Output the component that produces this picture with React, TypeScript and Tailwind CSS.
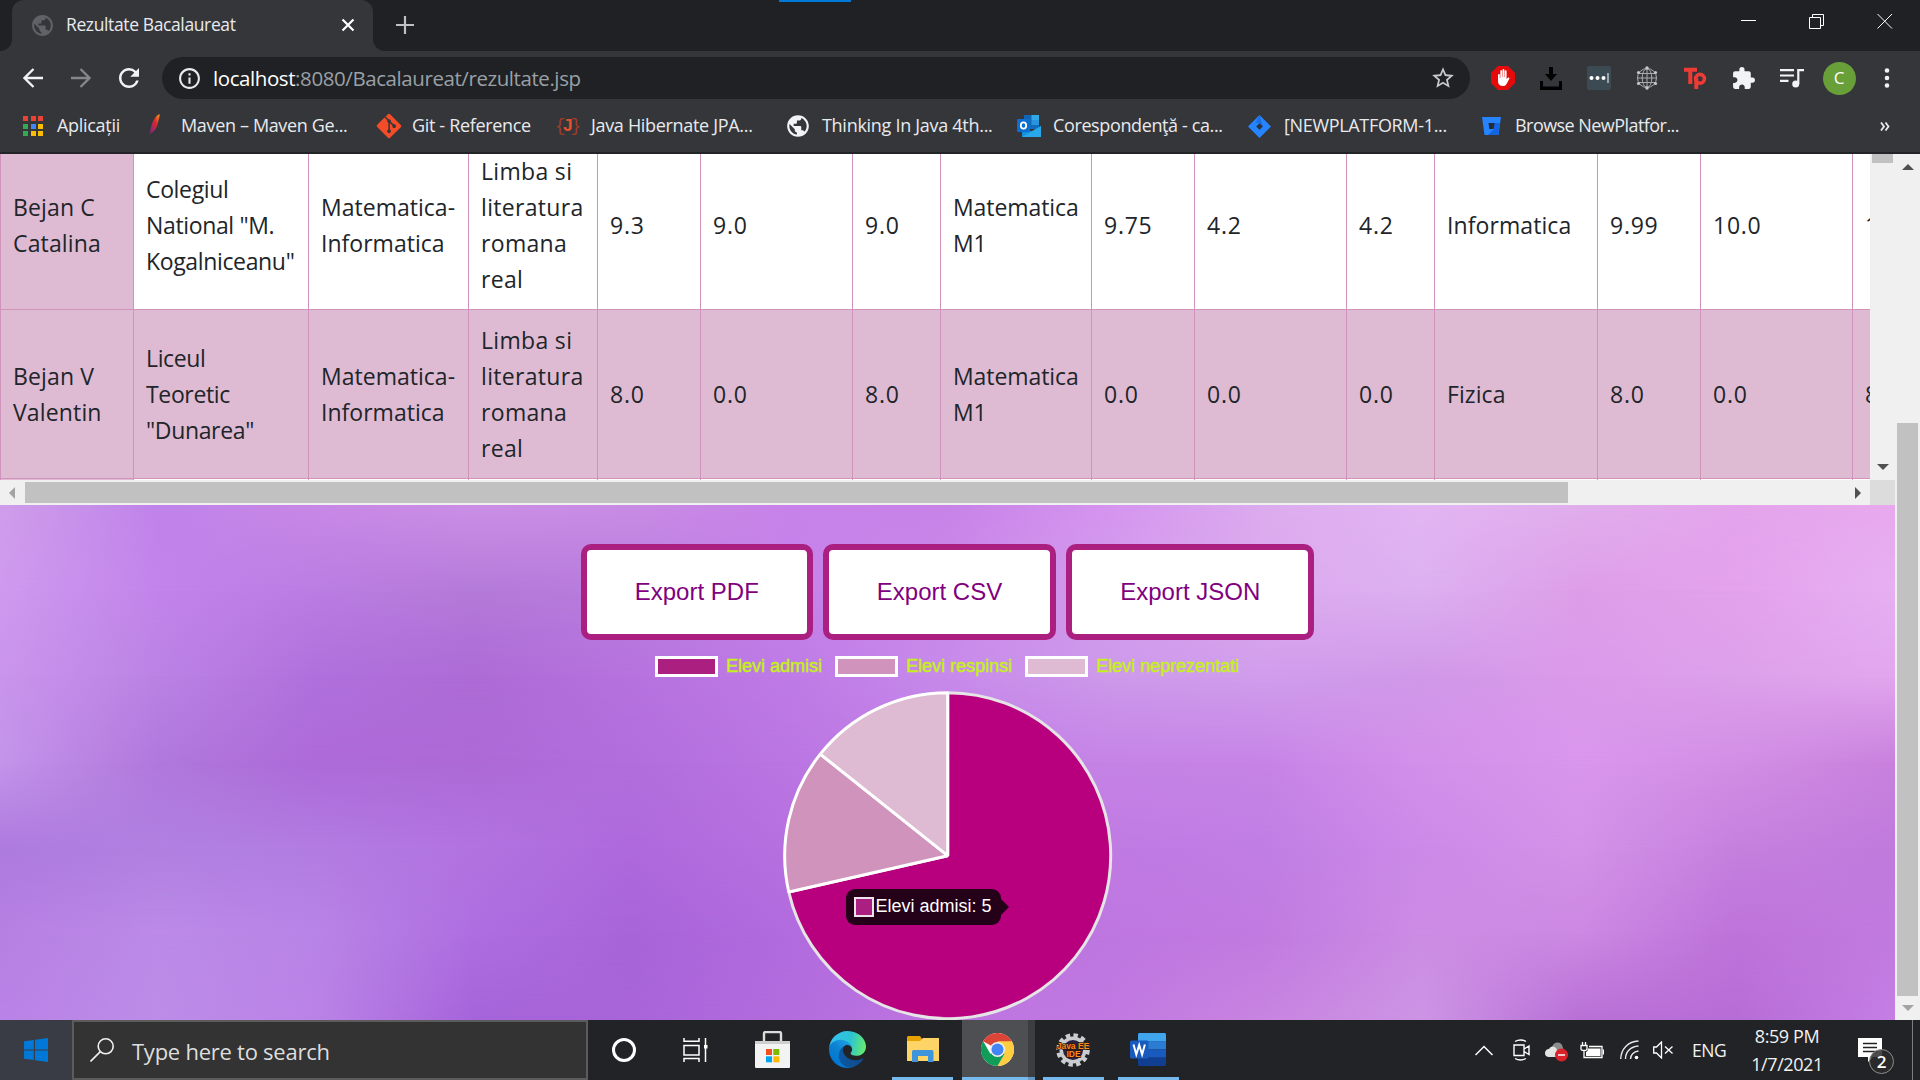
import React from "react";
import { FaGitAlt } from "react-icons/fa";
import { MdPublic, MdOutlineInfo, MdStarOutline, MdExtension, MdRefresh } from "react-icons/md";

/* ---------- browser frame ---------- */

function TabStrip() {
  return (
    <div className="relative flex h-[51px] shrink-0 bg-[#202124]">
      <div className="absolute left-[779px] top-0 h-[2px] w-[72px] bg-[#0078d7]" />
      <div className="flex w-[12px] items-end bg-[#35363a]">
        <div className="h-full w-full rounded-br-[12px] bg-[#202124]" />
      </div>
      <div className="flex w-[361px] items-center rounded-t-[12px] bg-[#35363a] pl-[18px]">
        <MdPublic className="mt-[-1px] size-[25px] text-[#5f6368]" />
        <span className="ml-[11px] mt-[-3px] w-[263px] whitespace-nowrap text-[17.5px] tracking-[-0.38px] text-[#e8eaed]">
          Rezultate Bacalaureat
        </span>
        <svg className="ml-[12px] mt-[-1px] size-[14px]" viewBox="0 0 14 14" stroke="#fff" strokeWidth="2.2">
          <path d="M1.5 1.5 12.5 12.5M12.5 1.5 1.5 12.5" />
        </svg>
      </div>
      <div className="flex w-[12px] bg-[#35363a]">
        <div className="h-full w-full rounded-bl-[12px] bg-[#202124]" />
      </div>
      <svg className="ml-[11px] mt-[16px] size-[18px]" viewBox="0 0 18 18" stroke="#bdc1c6" strokeWidth="2.2">
        <path d="M9 0V18M0 9H18" />
      </svg>
      <div className="ml-auto flex gap-[52px] pr-[27px] pt-[14px]">
        <svg className="size-[16px]" viewBox="0 0 16 16" stroke="#fff">
          <path d="M0 6.5H15" />
        </svg>
        <svg className="size-[16px]" viewBox="0 0 16 16" stroke="#fff" fill="none">
          <path d="M.5 3.5H11.5V14.5H.5ZM3.5 3.5V.5H14.5V11.5H11.5" />
        </svg>
        <svg className="size-[16px]" viewBox="0 0 16 16" stroke="#fff">
          <path d="M.5 0 15 14.5M15 0 .5 14.5" />
        </svg>
      </div>
    </div>
  );
}

function Slot({ children }: { children: React.ReactNode }) {
  return <div className="flex w-[48px] shrink-0 items-center justify-center">{children}</div>;
}

function Toolbar() {
  return (
    <div className="flex h-[54px] shrink-0 items-center bg-[#35363a] pl-[9px]">
      <Slot>
        <svg className="size-[20px]" viewBox="0 0 20 20" fill="none" stroke="#f1f3f4" strokeWidth="2.3">
          <path d="M20 10H2M10.5 1 1.5 10 10.5 19" />
        </svg>
      </Slot>
      <Slot>
        <svg className="size-[20px]" viewBox="0 0 20 20" fill="none" stroke="#85878b" strokeWidth="2.3">
          <path d="M0 10H18M9.5 1 18.5 10 9.5 19" />
        </svg>
      </Slot>
      <Slot>
        <MdRefresh className="size-[30px] text-[#f1f3f4]" />
      </Slot>
      <div className="ml-[9px] flex h-[42px] w-[1308px] shrink-0 items-center rounded-full bg-[#202124] pl-[15px] pr-[14px]">
        <MdOutlineInfo className="size-[25px] text-[#e8eaed]" />
        <span className="ml-[11px] whitespace-nowrap text-[20.5px] tracking-[-0.42px] text-[#9aa0a6]">
          <span className="text-white">localhost</span>:8080/Bacalaureat/rezultate.jsp
        </span>
        <MdStarOutline className="ml-auto size-[26px] text-[#c8cacd]" />
      </div>
      <div className="ml-[9px] flex">
        <Slot>
          <svg className="size-[24px]" viewBox="0 0 24 24">
            <path d="M7 0H17L24 7V17L17 24H7L0 17V7Z" fill="#e60b0b" />
            <path
              d="M7 9c0-1.400 1.800-1.400 1.800 0V12h.5V5.400c0-1.400 1.800-1.400 1.800 0V11h.4V4.200c0-1.500 1.900-1.500 1.900 0V11h.4V5.400c0-1.400 1.800-1.400 1.800 0V13.200l1.200-1.400c.9-1 2 0 1.500 1l-2.600 5c-.8 1.600-2 2.300-3.900 2.300-3 0-4.800-1.800-4.800-5Z"
              fill="#fff"
            />
          </svg>
        </Slot>
        <Slot>
          <svg className="size-[24px]" viewBox="0 0 24 24" fill="#000">
            <path d="M10 1H14V8H18L12 15 6 8H10ZM1 15H4V20.5H20V15H23V24H1Z" />
          </svg>
        </Slot>
        <Slot>
          <svg className="size-[24px]" viewBox="0 0 24 24">
            <rect width="24" height="24" rx="2" fill="#3c4a54" />
            <circle cx="4.5" cy="12" r="2" fill="#fff" />
            <circle cx="10.5" cy="12" r="2" fill="#fff" />
            <circle cx="16.5" cy="12" r="2" fill="#fff" />
            <path d="M21 7V17" stroke="#cfd3d6" strokeWidth="1.3" />
          </svg>
        </Slot>
        <Slot>
          <svg className="size-[24px]" viewBox="0 0 24 24" fill="none" stroke="#a9abae" strokeWidth="1">
            <circle cx="12" cy="12" r="9.5" />
            <ellipse cx="12" cy="12" rx="4.8" ry="9.5" />
            <path d="M12 2V22M2 12H22M4 7.5H20M4 16.5H20" />
            <g fill="#c5c7ca" stroke="none">
              <circle cx="12" cy="2" r="1.7" />
              <circle cx="12" cy="22" r="1.7" />
              <circle cx="3.5" cy="6.5" r="1.6" />
              <circle cx="20.5" cy="6.5" r="1.6" />
              <circle cx="3.5" cy="17.5" r="1.6" />
              <circle cx="20.5" cy="17.5" r="1.6" />
            </g>
          </svg>
        </Slot>
        <Slot>
          <svg className="size-[24px]" viewBox="0 0 24 24" fill="none" stroke="#ee3b36">
            <path d="M1 3.8H14M7.3 3V18" strokeWidth="4" />
            <path d="M13.3 23V12" strokeWidth="4" />
            <circle cx="17" cy="12.8" r="4.4" strokeWidth="3.6" />
          </svg>
        </Slot>
        <Slot>
          <MdExtension className="size-[25px] text-[#f1f3f4]" />
        </Slot>
        <Slot>
          <svg className="h-[20px] w-[25px]" viewBox="0 0 25 20" fill="none" stroke="#f1f3f4" strokeWidth="2.2">
            <path d="M1 2.200H15M1 7.500H15M1 12.800H9.500M19.300 16V2.200H25" />
            <circle cx="16.700" cy="16" r="3.500" fill="#f1f3f4" stroke="none" />
          </svg>
        </Slot>
        <Slot>
          <div className="flex size-[33px] items-center justify-center rounded-full bg-[#689f38] text-[17px] text-white">C</div>
        </Slot>
        <Slot>
          <svg className="h-[20px] w-[6px]" viewBox="0 0 6 20" fill="#f1f3f4">
            <circle cx="3" cy="2.5" r="2.3" />
            <circle cx="3" cy="10" r="2.3" />
            <circle cx="3" cy="17.5" r="2.3" />
          </svg>
        </Slot>
      </div>
    </div>
  );
}

function AppsIcon() {
  const colors = ["#ea4335", "#ea4335", "#ea4335", "#34a853", "#4285f4", "#fbbc04", "#34a853", "#fbbc04", "#fbbc04"];
  return (
    <div className="grid w-[20px] grid-cols-3 gap-[2.5px]">
      {colors.map((c, i) => (
        <div key={i} className="h-[5px]" style={{ backgroundColor: c }} />
      ))}
    </div>
  );
}

function MavenIcon() {
  return (
    <svg className="h-[24px] w-[12px]" viewBox="0 0 12 24">
      <defs>
        <linearGradient id="feather" x1="1" y1="0" x2="0" y2="1">
          <stop offset="0" stopColor="#f7a11b" />
          <stop offset=".35" stopColor="#d9282f" />
          <stop offset=".7" stopColor="#8d2a6b" />
          <stop offset="1" stopColor="#3b2a55" />
        </linearGradient>
      </defs>
      <path d="M11.5 0C7.5 1.5 5 6.5 3.6 11 2.4 14.7 1.6 18 .3 23.5L1.4 20C5.8 18.5 8.3 15 9.6 10 10.6 6 12 2 11.5 0Z" fill="url(#feather)" />
    </svg>
  );
}

function OutlookIcon() {
  return (
    <svg className="size-[24px]" viewBox="0 0 24 24">
      <rect x="7" y="1" width="15" height="14" fill="#0f6cbd" />
      <rect x="7" y="1" width="7.5" height="5" fill="#1066b5" />
      <rect x="14.5" y="1" width="7.5" height="5" fill="#32a9e7" />
      <rect x="14.5" y="6" width="7.5" height="5" fill="#2a93dc" />
      <path d="M5 12 14.5 17.5 24 12V23H5Z" fill="#1490df" />
      <path d="M5 23 24 12V23Z" fill="#28a8ea" />
      <rect x="0" y="5" width="13" height="13" rx="1" fill="#0a6fd0" />
      <ellipse cx="6.5" cy="11.5" rx="2.7" ry="3.1" fill="none" stroke="#fff" strokeWidth="1.8" />
    </svg>
  );
}

const bookmarks = [
  { label: "Aplicații", w: "w-[125px]", gap: "w-[34px]", track: "tracking-[-0.3px]", icon: <AppsIcon /> },
  { label: "Maven – Maven Ge...", w: "w-[229px]", gap: "w-[33px]", track: "tracking-[-0.35px]", icon: <MavenIcon /> },
  { label: "Git - Reference", w: "w-[179px]", gap: "w-[35px]", track: "tracking-[-0.34px]", icon: <FaGitAlt className="ml-[-2px] size-[28px] text-[#f34c28]" /> },
  {
    label: "Java Hibernate JPA...",
    w: "w-[231px]",
    gap: "w-[35px]",
    track: "tracking-[-0.32px]",
    icon: (
      <span className="flex w-[24px] items-center justify-center font-['Liberation_Mono'] text-[18px] text-[#a03c28]">
        <span className="-mr-[3px]">{"{"}</span>
        <b className="text-[#e2502e]">J</b>
        <span className="-ml-[3px]">{"}"}</span>
      </span>
    ),
  },
  { label: "Thinking In Java 4th...", w: "w-[230px]", gap: "w-[35px]", track: "tracking-[-0.29px]", icon: <MdPublic className="ml-[-2px] size-[26px] text-[#f1f3f4]" /> },
  { label: "Corespondenţă - ca...", w: "w-[231px]", gap: "w-[36px]", track: "tracking-[-0.38px]", icon: <OutlookIcon /> },
  {
    label: "[NEWPLATFORM-1...",
    w: "w-[234px]",
    gap: "w-[36px]",
    track: "tracking-[-0.33px]",
    icon: (
      <svg className="size-[23px]" viewBox="0 0 24 24">
        <path d="M12 0 24 12 12 24 0 12Z" fill="#2684ff" />
        <path d="M12 0 8 8 12 8.5V16L15.5 12Z" fill="#1558bc" opacity=".45" />
        <path d="M12 8.5 15.5 12 12 15.5 8.5 12Z" fill="#2c3140" />
      </svg>
    ),
  },
  {
    label: "Browse NewPlatfor...",
    w: "w-[220px]",
    gap: "w-[33px]",
    track: "tracking-[-0.55px]",
    icon: (
      <svg className="h-[18px] w-[19px]" viewBox="0 0 19 18">
        <path d="M0 0H19L16.5 18H2.5Z" fill="#2684ff" />
        <path d="M12 6H18L16.5 18H6L12 12Z" fill="#1264e0" />
        <path d="M6.5 6H12.5L11.7 12H7.3Z" fill="#272b38" />
      </svg>
    ),
  },
];

function Bookmarks() {
  return (
    <div className="flex h-[49px] shrink-0 items-center border-b-2 border-[#232427] bg-[#35363a] pb-[5px] pl-[23px]">
      {bookmarks.map((b) => (
        <div key={b.label} className={"flex shrink-0 items-center " + b.w}>
          <div className={"flex shrink-0 items-center " + b.gap}>{b.icon}</div>
          <span className={"mt-[-2px] whitespace-nowrap text-[18px] text-[#e8eaed] " + b.track}>{b.label}</span>
        </div>
      ))}
      <svg className="ml-auto mr-[30px] h-[9px] w-[10px]" viewBox="0 0 10 9" fill="none" stroke="#e8eaed" strokeWidth="1.8">
        <path d="M1 .5 4 4.5 1 8.5M5.5.5 8.5 4.5 5.5 8.5" />
      </svg>
    </div>
  );
}

/* ---------- results table ---------- */

const columnWidths = [134, 175, 160, 129, 103, 152, 88, 151, 103, 152, 88, 163, 103, 152, 88];
const template = columnWidths.map((w) => w + "px").join(" ");

const NUM = "tracking-[0.75px]";
const tracks = ["tracking-[0.15px]", "tracking-[-0.35px]", "tracking-[0.02px]", "tracking-[0.32px]", NUM, NUM, NUM, "tracking-[-0.08px]", NUM, NUM, NUM, "tracking-[0.08px]", NUM, NUM, NUM];

const rows = [
  {
    tint: false,
    cells: ["Bejan C\nCatalina", 'Colegiul\nNational "M.\nKogalniceanu"', "Matematica-\nInformatica", "Limba si\nliteratura\nromana\nreal", "9.3", "9.0", "9.0", "Matematica\nM1", "9.75", "4.2", "4.2", "Informatica", "9.99", "10.0", "10.0"],
  },
  {
    tint: true,
    cells: ["Bejan V\nValentin", 'Liceul\nTeoretic\n"Dunarea"', "Matematica-\nInformatica", "Limba si\nliteratura\nromana\nreal", "8.0", "0.0", "8.0", "Matematica\nM1", "0.0", "0.0", "0.0", "Fizica", "8.0", "0.0", "8.0"],
  },
  { tint: false, cells: Array(15).fill("") },
];

function ResultsTable() {
  return (
    <div className="flex h-[326px] w-[1870px] flex-col overflow-hidden border-l border-[#d094bc] bg-white">
      <div className="-ml-px mt-[-13px]">
        {rows.map((row, r) => (
          <div
            key={r}
            className={"grid h-[169px] " + (row.tint ? "bg-[#debbd3]" : "bg-white")}
            style={{ gridTemplateColumns: template }}
          >
            {row.cells.map((cell, c) => (
              <div
                key={c}
                className={
                  "flex items-center whitespace-pre border-b border-r border-[#d094bc] text-[23px] leading-[36px] text-[#212529] " +
                  tracks[c] +
                  (c === 0 ? " bg-[#debbd3] pl-[13px]" : " pl-[12px]")
                }
              >
                {cell}
              </div>
            ))}
          </div>
        ))}
      </div>
    </div>
  );
}

function Arrow({ d, color }: { d: string; color: string }) {
  return (
    <svg className="size-[12px]" viewBox="0 0 12 12" fill={color}>
      <path d={d} />
    </svg>
  );
}

/* ---------- backdrop: rows of colour stops blended downwards ---------- */

const backdropRows = [
  ["#cf9eea", "#c083ea", "#c888e6", "#cb8fe6", "#c98ce4", "#c882ea", "#c883e8", "#d594ef", "#dcabee", "#e3b5f3", "#e1aeec", "#e4a4ec", "#e8a9ee"],
  ["#ce9aee", "#c284ea", "#ba7de2", "#b47ad8", "#b87cde", "#c482e8", "#ca8aea", "#d29bec", "#dcaaee", "#dcb0f0", "#dd9ee8", "#e4a2ec", "#e6b0f2"],
  ["#c995ec", "#bb82e4", "#b070dc", "#ad6bd6", "#b672de", "#be7ae6", "#c78aea", "#cd99ea", "#d09dec", "#d098e8", "#db9aea", "#dca0ea", "#e2a6ee"],
  ["#c494ea", "#b078dc", "#ad6ad8", "#ad6ad6", "#b16edc", "#ba76e2", "#c17ee6", "#c583e6", "#c684e6", "#d390ea", "#d996ec", "#d28ee4", "#c881dd"],
  ["#ae7ade", "#b080e0", "#b27ce2", "#b273e0", "#ae69dc", "#b770e0", "#bc75e2", "#c07ae2", "#c07ee4", "#cc8ae8", "#d492e8", "#c580de", "#c07adc"],
  ["#b680e2", "#bc8ae8", "#b884e6", "#ae6ee0", "#a764d8", "#b26bde", "#ba71e0", "#be76e0", "#c17ae0", "#cc8ce4", "#cc88e2", "#bd73da", "#c17ae0"],
  ["#b982e6", "#bc8ce8", "#ba82e6", "#a664da", "#a864d9", "#b36cdd", "#bd76e0", "#c078e0", "#c884e0", "#cc94e4", "#b870d6", "#b66cd5", "#c47ee4"],
];

function Backdrop() {
  const step = 100 / (backdropRows.length - 1);
  return (
    <div className="absolute inset-0">
      {backdropRows.map((stops, i) => (
        <div
          key={i}
          className="absolute inset-0"
          style={{
            backgroundImage: `linear-gradient(to right, ${stops.join(", ")})`,
            maskImage: i === 0 ? undefined : `linear-gradient(to bottom, transparent ${step * (i - 1)}%, black ${step * i}%)`,
          }}
        />
      ))}
    </div>
  );
}

/* ---------- chart ---------- */

const legend = [
  { label: "Elevi admisi", fill: "bg-[#ab1f80]" },
  { label: "Elevi respinsi", fill: "bg-[#d094bc]" },
  { label: "Elevi neprezentati", fill: "bg-[#debbd3]" },
];

function slicePath(from: number, to: number) {
  const r = 163;
  const p = (t: number) => `${164.7 + r * Math.sin(t * 2 * Math.PI)} ${164.7 - r * Math.cos(t * 2 * Math.PI)}`;
  return `M164.7 164.7L${p(from)}A${r} ${r} 0 ${to - from > 0.5 ? 1 : 0} 1 ${p(to)}Z`;
}

function Chart() {
  return (
    <div className="relative">
      <svg className="size-[330px]" viewBox="0 0 330 330" strokeWidth="3" strokeLinejoin="bevel">
        <path d={slicePath(0, 5 / 7)} fill="#b8007f" stroke="#e5e5e5" />
        <path d={slicePath(5 / 7, 6 / 7)} fill="#d094bc" stroke="#fff" />
        <path d={slicePath(6 / 7, 1)} fill="#debbd3" stroke="#fff" />
      </svg>
      <div className="absolute left-[63px] top-[198.500px] flex items-center">
        <div className="flex h-[36px] w-[155px] items-center rounded-[9px] bg-[#240019] pl-[8px]">
          <div className="size-[20px] border-[2px] border-[#eee3ea] bg-[#ab1f80]" />
          <span className="ml-[2px] mt-[-2px] whitespace-nowrap font-['Liberation_Sans'] text-[18px] leading-none text-white">Elevi admisi: 5</span>
        </div>
        <svg className="h-[16px] w-[8px]" viewBox="0 0 8 16" fill="#240019">
          <path d="M0 0 8 8 0 16Z" />
        </svg>
      </div>
    </div>
  );
}

function Page() {
  return (
    <div className="flex h-[866px] shrink-0">
      <div className="flex w-[1895px] flex-col">
        <div className="flex">
          <ResultsTable />
          <div className="flex w-[25px] flex-col items-center bg-[#f0f0f0]">
            <div className="h-[9px] w-[21px] bg-[#c1c1c1]" />
            <div className="mb-[7px] mt-auto">
              <Arrow d="M0 3H12L6 9Z" color="#505050" />
            </div>
          </div>
        </div>
        <div className="flex h-[25px] items-center bg-[#f0f0f0]">
          <div className="flex w-[25px] justify-center pr-[2px]">
            <Arrow d="M9 0V12L3 6Z" color="#a3a3a3" />
          </div>
          <div className="h-[21px] w-[1543px] bg-[#c1c1c1]" />
          <div className="ml-auto mr-[6px]">
            <Arrow d="M3 0V12L9 6Z" color="#505050" />
          </div>
          <div className="h-full w-[25px] bg-[#dcdcdc]" />
        </div>
        <div className="relative h-[515px] overflow-hidden">
          <Backdrop />
          <div className="relative flex flex-col items-center pt-[39px] font-['Liberation_Sans']">
            <div className="flex gap-[10px]">
              {["Export PDF", "Export CSV", "Export JSON"].map((t) => (
                <button key={t} className="h-[96px] rounded-[10px] border-[6px] border-[#ab1f80] bg-white px-[48px] text-[24px] text-[#800080]">
                  {t}
                </button>
              ))}
            </div>
            <div className="mt-[16px] flex h-[21px] items-center gap-[13px] pr-px">
              {legend.map((l) => (
                <div key={l.label} className="flex items-center gap-[8px]">
                  <div className={"h-[21px] w-[63px] border-[3px] border-white " + l.fill} />
                  <span className="mt-[-2px] whitespace-nowrap text-[18px] leading-none text-[#c6f01c] [-webkit-text-stroke:0.5px_#c6f01c]">{l.label}</span>
                </div>
              ))}
            </div>
            <div className="mt-[13.500px]">
              <Chart />
            </div>
          </div>
        </div>
      </div>
      <div className="flex w-[25px] flex-col items-center bg-[#f0f0f0]">
        <div className="mt-[7px]">
          <Arrow d="M0 9H12L6 3Z" color="#505050" />
        </div>
        <div className="mt-[250px] h-[573px] w-[21px] bg-[#c1c1c1]" />
        <div className="mt-[6px]">
          <Arrow d="M0 3H12L6 9Z" color="#a3a3a3" />
        </div>
      </div>
    </div>
  );
}

/* ---------- taskbar ---------- */

function StoreIcon() {
  return (
    <svg className="h-[37px] w-[35px]" viewBox="0 0 35 37">
      <path d="M9 11V2.5C9 1.5 9.7 1 10.5 1H24.5C25.5 1 26 1.5 26 2.5V11" fill="none" stroke="#dcdcdc" strokeWidth="2.4" />
      <path d="M0 10H35V35.5C35 36.5 34.5 37 33.5 37H1.5C.5 37 0 36.5 0 35.5Z" fill="#f3f3f3" />
      <path d="M0 10H35V13H0Z" fill="#cfcfcf" />
      <path d="M11 18H17V24H11Z" fill="#f25022" />
      <path d="M18.3 18H24.3V24H18.3Z" fill="#7fba00" />
      <path d="M11 25.3H17V31.3H11Z" fill="#00a4ef" />
      <path d="M18.3 25.3H24.3V31.3H18.3Z" fill="#ffb900" />
    </svg>
  );
}

function EdgeIcon() {
  return (
    <svg className="size-[37px]" viewBox="0 0 256 256">
      <defs>
        <linearGradient id="edgeA" x1="60" y1="177" x2="231" y2="177" gradientUnits="userSpaceOnUse">
          <stop stopColor="#0c59a4" />
          <stop offset="1" stopColor="#114a8b" />
        </linearGradient>
        <linearGradient id="edgeB" x1="150" y1="100" x2="46" y2="220" gradientUnits="userSpaceOnUse">
          <stop stopColor="#1b9de2" />
          <stop offset=".5" stopColor="#0d80cf" />
          <stop offset="1" stopColor="#0078d4" />
        </linearGradient>
        <linearGradient id="edgeC" x1="10" y1="60" x2="250" y2="110" gradientUnits="userSpaceOnUse">
          <stop stopColor="#35c1f1" />
          <stop offset=".55" stopColor="#2bc3d2" />
          <stop offset="1" stopColor="#66eb6e" />
        </linearGradient>
      </defs>
      <path fill="url(#edgeA)" d="M231 190.500a93.700 93.700 0 0 1-10.500 4.700 101.900 101.900 0 0 1-35.900 6.400c-47.300 0-88.500-32.500-88.500-74.300a31.500 31.500 0 0 1 16.400-27.300c-42.800 1.800-53.800 46.400-53.800 72.500 0 73.900 68.100 81.400 82.800 81.400 7.900 0 19.800-2.300 27-4.600l1.300-.4a128.300 128.300 0 0 0 66.600-52.800 4 4 0 0 0-5.400-5.600Z" />
      <path fill="url(#edgeB)" d="M105.700 241.400a79.200 79.200 0 0 1-22.700-21.300A80.700 80.700 0 0 1 112.500 100c3.100-1.500 8.500-4.100 15.600-4a32.400 32.400 0 0 1 25.700 13 31.900 31.900 0 0 1 6.300 18.700c0-.2 24.500-79.600-80-79.600-43.900 0-80 41.700-80 78.200a130.200 130.200 0 0 0 12.100 56 128 128 0 0 0 156.400 67.100 75.600 75.600 0 0 1-62.800-8Z" />
      <path fill="url(#edgeC)" d="M152.300 148.900c-.8 1-3.300 2.500-3.300 5.700 0 2.600 1.700 5.100 4.700 7.300 14.400 10 41.500 8.700 41.600 8.700a59.600 59.600 0 0 0 30.300-8.400 61.400 61.400 0 0 0 30.400-52.900c.3-22.400-8-37.300-11.300-43.900C223.500 23.900 177.700 0 128 0A128 128 0 0 0 0 126.200c.5-36.500 36.800-66 80-66 3.500 0 23.500.3 42 10 16.300 8.600 24.900 18.900 30.800 29.200 6.200 10.700 7.300 24.100 7.300 29.500 0 5.300-2.700 13.300-7.800 20Z" />
    </svg>
  );
}

function ExplorerIcon() {
  return (
    <svg className="h-[27px] w-[32px]" viewBox="0 0 32 27">
      <path d="M0 1.500C0 .7.500 0 1.500 0H13L15 3V8H0Z" fill="#e8a200" />
      <path d="M0 5H13L16 2H32V25H0Z" fill="#ffd466" />
      <path d="M5 26V16C5 14.500 6 14 7 14H25C26 14 26.500 15 26.500 16V26H21V20H11V26Z" fill="#3e95dc" />
    </svg>
  );
}

function ChromeIcon() {
  return (
    <svg className="size-[33px]" viewBox="0 0 48 48">
      <circle cx="24" cy="24" r="24" fill="#fff" />
      <path d="M24 24 3.200 12A24 24 0 0 1 44.800 12Z" fill="#db4437" />
      <path d="M24 24V12H44.800A24 24 0 0 1 24 48L34.400 30Z" fill="#ffcd40" />
      <path d="M24 24 34.400 30 24 48A24 24 0 0 1 3.200 12L13.600 30Z" fill="#0f9d58" />
      <circle cx="24" cy="24" r="11" fill="#f1f1f1" />
      <circle cx="24" cy="24" r="8.800" fill="#4285f4" />
    </svg>
  );
}

function EclipseIcon() {
  return (
    <svg className="size-[34px]" viewBox="0 0 34 34">
      <circle cx="17" cy="17" r="14.800" fill="none" stroke="#c9cdd0" strokeWidth="4" strokeDasharray="4.400 3.350" />
      <circle cx="17" cy="17" r="11.800" fill="#2b2140" stroke="#c9cdd0" strokeWidth="3.500" />
      <text x="17" y="16" textAnchor="middle" fontFamily="Liberation Sans" fontWeight="bold" fontSize="8.500" fill="#ff8a1c" stroke="#2a1608" strokeWidth="1.400" paintOrder="stroke">
        Java EE
      </text>
      <text x="17.500" y="24" textAnchor="middle" fontFamily="Liberation Sans" fontWeight="bold" fontSize="8.500" fill="#ff8a1c" stroke="#2a1608" strokeWidth="1.400" paintOrder="stroke">
        IDE
      </text>
    </svg>
  );
}

function WordIcon() {
  return (
    <svg className="h-[33px] w-[36px]" viewBox="0 0 36 33">
      <path d="M8 1.500C8 .7 8.700 0 9.500 0H34.500C35.300 0 36 .7 36 1.500V8.500H8Z" fill="#41a5ee" />
      <path d="M8 8.200H36V16.500H8Z" fill="#2b7cd3" />
      <path d="M8 16.500H36V24.700H8Z" fill="#185abd" />
      <path d="M8 24.700H36V31.500C36 32.300 35.300 33 34.500 33H9.500C8.700 33 8 32.300 8 31.500Z" fill="#103f91" />
      <rect y="7.500" width="18.500" height="18" rx="1.500" fill="#185abd" />
      <path d="M3.500 11.500 6.300 21.500 9.200 12 12.100 21.500 14.900 11.500" fill="none" stroke="#fff" strokeWidth="2" />
    </svg>
  );
}

function TaskApp({ children, width, underline, active }: { children: React.ReactNode; width: string; underline?: string; active?: boolean }) {
  return (
    <div className={"flex h-full shrink-0 flex-col items-center " + width + (active ? " bg-[#4d4f53]" : "")}>
      <div className="flex h-[57px] items-center pt-[2px]">{children}</div>
      {underline && <div className={"h-[3px] bg-[#76b9ed] " + underline} />}
    </div>
  );
}

function Taskbar() {
  return (
    <div className="flex h-[60px] shrink-0 bg-[#212326]">
      <div className="flex w-[72px] items-center justify-center bg-[#393c44]">
        <svg className="size-[24px]" viewBox="0 0 24 24" fill="#0078d7">
          <path d="M0 3.300 9.800 2V11.400H0ZM11 1.800 24 0V11.400H11ZM0 12.600H9.800V22L0 20.700ZM11 12.600H24V24L11 22.200Z" />
        </svg>
      </div>
      <div className="flex w-[516px] items-center border-2 border-[#5b5b5b] bg-[#333333] pl-[16px]">
        <svg className="size-[24px]" viewBox="0 0 24 24" fill="none" stroke="#f2f2f2" strokeWidth="1.600">
          <circle cx="15.700" cy="8.300" r="7.500" />
          <path d="M10.300 13.600.500 23.500" />
        </svg>
        <span className="ml-[18px] mt-[2px] whitespace-nowrap text-[22px] tracking-[-0.25px] text-[#dedede]">Type here to search</span>
      </div>
      <TaskApp width="w-[72px]">
        <div className="size-[24px] rounded-full border-[3px] border-white" />
      </TaskApp>
      <TaskApp width="w-[72px]">
        <svg className="h-[24px] w-[26px]" viewBox="0 0 26 24" fill="none" stroke="#fff" strokeWidth="1.500">
          <path d="M1 0V3.300H16V0M1 7.500H16V17H1ZM1 24V20.500H16V24M22.500 0V24" />
          <path d="M21 7H24.500V10.500H21Z" fill="#fff" stroke="none" />
        </svg>
      </TaskApp>
      <div className="w-[3px]" />
      <TaskApp width="w-[74px]">
        <StoreIcon />
      </TaskApp>
      <TaskApp width="w-[77px]">
        <EdgeIcon />
      </TaskApp>
      <TaskApp width="w-[73px]" underline="w-[61px]">
        <ExplorerIcon />
      </TaskApp>
      <div className="w-[3px]" />
      <div className="flex w-[73px] bg-[#3b3d40]">
        <TaskApp width="w-[66px]" underline="w-[66px]" active>
          <div className="pl-[4px]">
            <ChromeIcon />
          </div>
        </TaskApp>
        <div className="mt-[57px] h-[3px] w-[7px] bg-[#6499c5]" />
      </div>
      <TaskApp width="w-[76px]" underline="w-[61px]">
        <EclipseIcon />
      </TaskApp>
      <TaskApp width="w-[74px]" underline="w-[61px]">
        <WordIcon />
      </TaskApp>
      <div className="ml-auto flex items-center text-[18px] text-[#f2f2f2]">
        <svg className="h-[11px] w-[18px]" viewBox="0 0 18 11" fill="none" stroke="#fff" strokeWidth="1.500">
          <path d="M.500 10 9 1.500 17.500 10" />
        </svg>
        <svg className="ml-[20px] h-[22px] w-[17px]" viewBox="0 0 17 22" fill="none" stroke="#fff" strokeWidth="1.400">
          <path d="M1 6H11V16.500H1ZM11 10 16 7V15.500L11 12.500M2 2.500Q7.500-.5 13 2.500M2 19.500Q7.500 22.500 13 19.500" />
        </svg>
        <svg className="ml-[14px] mt-[2px] h-[22px] w-[24px]" viewBox="0 0 24 22">
          <path d="M8 7C10 1 18 1 19 8L22 14H10Z" fill="#8c8c8c" />
          <path d="M4.500 17C-1 16 .5 9 5 9 7 5 12 6 13 10L17 17Z" fill="#e4e4e4" />
          <circle cx="17.500" cy="15" r="6.500" fill="#d9222a" />
          <path d="M14 15H21" stroke="#fff" strokeWidth="1.500" />
        </svg>
        <svg className="ml-[12px] h-[18px] w-[24px]" viewBox="0 0 24 18" fill="none" stroke="#fff" strokeWidth="1.300">
          <path d="M1 4.500H7V8Q7 9.500 4 9.500 1 9.500 1 8ZM2.500 4.500V1M5.500 4.500V1M4 9.500V16.500H22V5.500H9" />
          <path d="M8 7.500H20.500V15H6V11Q8 10.500 8 7.500Z" fill="#fff" stroke="none" />
          <path d="M23.500 8.500V13.500" />
        </svg>
        <svg className="ml-[16px] h-[20px] w-[19px]" viewBox="0 0 19 20" fill="none" stroke="#e8e8e8" strokeWidth="1.400">
          <path d="M.700 19C1 9 8 1.500 18.500 1M5.500 19C5.500 12 10.500 6.500 18.500 6M10.500 19C10.500 15 13.500 11.500 18.500 11" />
          <circle cx="16.500" cy="17.500" r="1.800" fill="#fff" stroke="none" />
        </svg>
        <svg className="ml-[14px] h-[18px] w-[20px]" viewBox="0 0 20 18" fill="none" stroke="#fff" strokeWidth="1.300">
          <path d="M.700 6H3.500L8.500 1V17L3.500 12H.700ZM12 5.500 19.500 12.500M19.500 5.500 12 12.500" />
        </svg>
        <span className="ml-[19px] mt-[1px] w-[34px] text-[17.500px] tracking-[-0.5px]">ENG</span>
        <div className="ml-[21px] flex w-[80px] flex-col items-center whitespace-nowrap text-[18px] leading-[28px] tracking-[-0.42px]">
          <span>8:59 PM</span>
          <span>1/7/2021</span>
        </div>
        <div className="relative ml-[31px] mr-[30px] mt-[-1px] h-[24px] w-[24px]">
          <svg className="size-[24px]" viewBox="0 0 24 24">
            <path d="M0 0H24V19H15L10 24V19H0Z" fill="#fff" />
            <path d="M5 5.500H19M5 9.500H19M5 13.500H19" stroke="#222" strokeWidth="1.300" />
          </svg>
          <div className="absolute left-[11px] top-[11px] flex size-[25px] items-center justify-center rounded-full border border-[#8d8d8d] bg-[#2b2b2b]/85 text-[17px] font-semibold leading-none text-white">
            2
          </div>
        </div>
        <div className="mr-[7px] h-[60px] w-px bg-[#7d7d7d]" />
      </div>
    </div>
  );
}

export default function App() {
  return (
    <div className="flex h-[1080px] w-[1920px] flex-col overflow-hidden bg-[#202124] font-['Open_Sans','Noto_Sans',sans-serif]">
      <TabStrip />
      <Toolbar />
      <Bookmarks />
      <Page />
      <Taskbar />
    </div>
  );
}
